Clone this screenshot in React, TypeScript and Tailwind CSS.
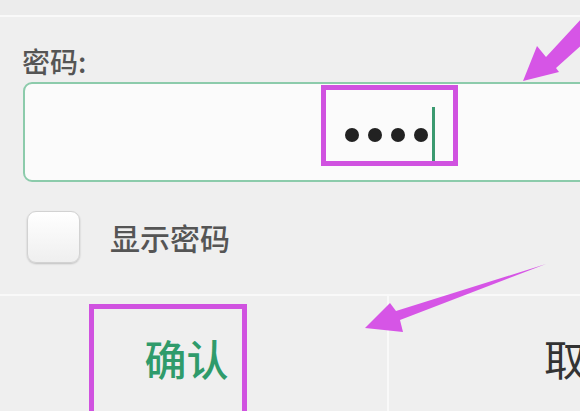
export default function App() {
  return (
    <div
      className="relative w-[580px] h-[411px] overflow-hidden bg-[#efefef]"
      style={{ fontFamily: '"Noto Sans CJK SC", "Noto Sans", sans-serif' }}
    >
      {/* dialog body */}
      <div className="h-[17px] border-b-2 border-[#f9f9f9] bg-[#ececec]" />

      <div className="pl-[22px] pt-[26px] text-[28px] leading-[36px] text-[#555] font-medium">
        密码:
      </div>

      <div className="ml-[23px] mt-[3px] w-[600px] h-[100px] rounded-l-[9px] border-2 border-[#8ccbab] bg-[#fbfbfb] flex items-center pl-[320px]">
        <div className="flex items-center gap-[9px] pt-[5px]">
          <span className="w-[14px] h-[14px] rounded-full bg-[#222]" />
          <span className="w-[14px] h-[14px] rounded-full bg-[#222]" />
          <span className="w-[14px] h-[14px] rounded-full bg-[#222]" />
          <span className="w-[14px] h-[14px] rounded-full bg-[#222]" />
        </div>
        <span className="ml-[4px] mt-[9px] w-[3px] h-[59px] bg-[#3b9a70]" />
      </div>

      <div className="flex items-center h-[112px] pl-[27px] pb-[2px]">
        <div className="w-[53px] h-[52px] rounded-[9px] border border-[#d2d2d2] bg-gradient-to-b from-white to-[#efefef] shadow-[0_1px_2px_rgba(0,0,0,0.2)]" />
        <span className="ml-[30px] text-[30px] leading-none text-[#555] font-medium">
          显示密码
        </span>
      </div>

      <div className="flex border-t-2 border-[#f9f9f9] h-[120px]">
        <div className="w-[387px] shrink-0 flex justify-center pt-[38px] pr-[14px]">
          <span className="text-[42px] leading-[48px] text-[#2f9b6b] font-medium">
            确认
          </span>
        </div>
        <div className="w-[2px] shrink-0 bg-[#f9f9f9]" />
        <div className="w-[394px] shrink-0 flex justify-center pt-[38px]">
          <span className="text-[42px] leading-[48px] text-[#333]">取消</span>
        </div>
      </div>

      {/* annotations */}
      <div className="absolute left-[321px] top-[85px] w-[137px] h-[81px] border-[5px] border-[#d052e0]" />
      <div className="absolute left-[89px] top-[304px] w-[158px] h-[130px] border-[5px] border-[#d052e0]" />
      <svg className="absolute left-0 top-0" width="580" height="411" viewBox="0 0 580 411">
        <polygon
          points="523,81 537,46 546,57 582,18 594,34 556,68 559,72"
          fill="#d655e6"
        />
        <polygon
          points="365,328 390,303 396,311 546,264 400,320 403,332"
          fill="#d655e6"
        />
      </svg>
    </div>
  );
}
